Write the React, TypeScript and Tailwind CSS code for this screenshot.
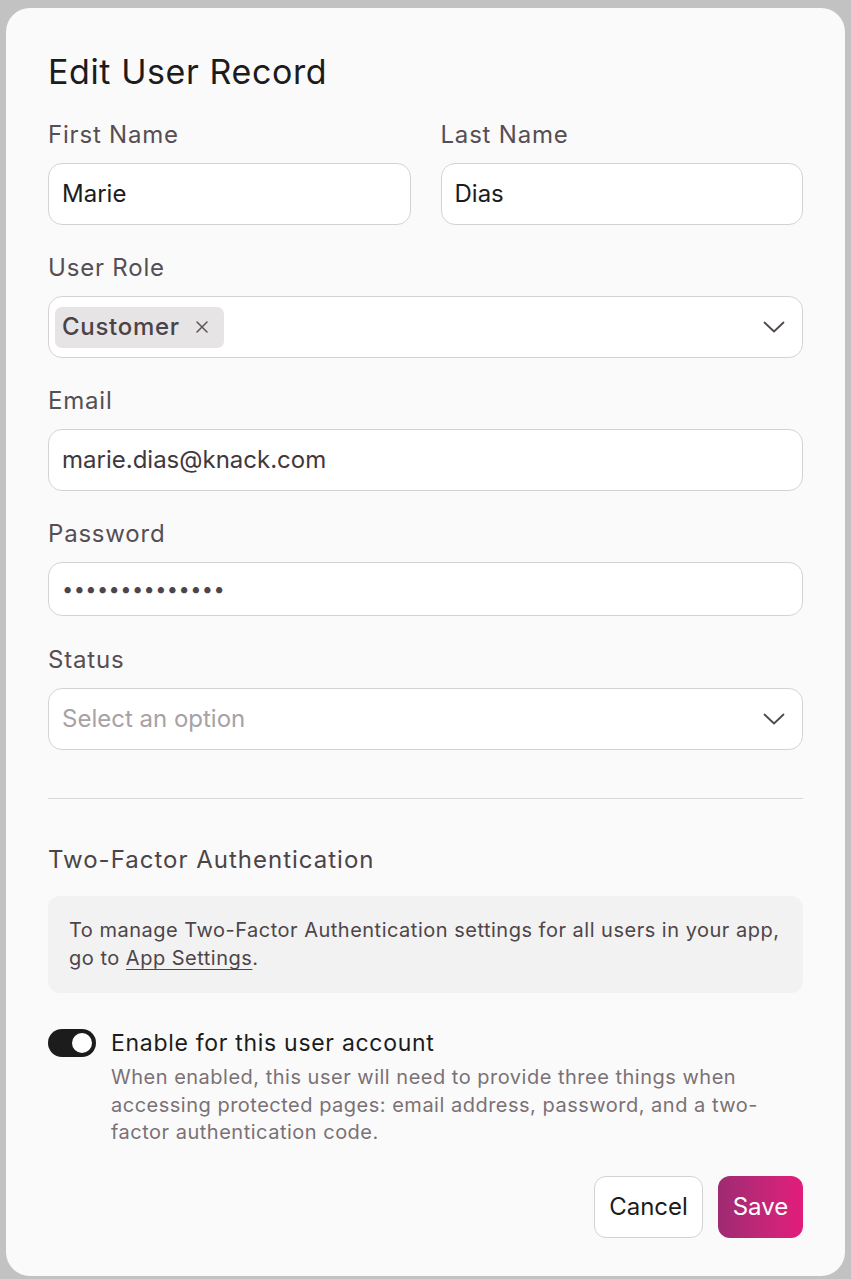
import React from "react";

const labelCls = "block h-[32px] leading-[32px] text-[24px] tracking-[0.8px] text-[#564e54]";
const boxCls =
  "w-full rounded-[14px] border border-[#d6d2d4] bg-white px-[13px] flex items-center";

function Chevron() {
  return (
    <svg width="22" height="12" viewBox="0 0 22 12" fill="none" className="shrink-0">
      <path d="M1.5 1.5 L11 10.5 L20.5 1.5" stroke="#4f484d" strokeWidth="1.8" strokeLinecap="round" strokeLinejoin="round" />
    </svg>
  );
}

function Field({ label, children }: { label: string; children: React.ReactNode }) {
  return (
    <div className="flex flex-col">
      <span className={labelCls}>{label}</span>
      <div className="mt-[12px]">{children}</div>
    </div>
  );
}

export default function App() {
  return (
    <div
      className="min-h-[1279px] bg-[#c2c2c2] px-[6px] pt-[8px] pb-[3px]"
      style={{ fontFamily: "Inter, 'Noto Sans', sans-serif" }}
    >
      <div className="rounded-[24px] bg-[#fafafa] px-[42px] pt-[44px] pb-[38px]">
        <h1 className="h-[40px] leading-[40px] text-[34px] tracking-[0.6px] text-[#1c1c1c]">Edit User Record</h1>

        <div className="mt-[27px] grid grid-cols-2 gap-[30px]">
          <Field label="First Name">
            <div className={`${boxCls} h-[62px] text-[24px] text-[#1c1c1c]`}>Marie</div>
          </Field>
          <Field label="Last Name">
            <div className={`${boxCls} h-[62px] text-[24px] text-[#1c1c1c]`}>Dias</div>
          </Field>
        </div>

        <div className="mt-[27px]">
          <Field label="User Role">
            <div className={`${boxCls} h-[62px] !pl-[6px] justify-between !pr-[17px]`}>
              <span className="flex h-[41px] items-center gap-[16px] rounded-[7px] bg-[#e6e4e5] pl-[7px] pr-[16px] text-[24px] font-medium tracking-[0.7px] text-[#4a4347]">
                Customer
                <svg width="12" height="12" viewBox="0 0 12 12" fill="none">
                  <path d="M1 1 L11 11 M11 1 L1 11" stroke="#5a5358" strokeWidth="1.5" strokeLinecap="round" />
                </svg>
              </span>
              <Chevron />
            </div>
          </Field>
        </div>

        <div className="mt-[27px]">
          <Field label="Email">
            <div className={`${boxCls} h-[62px] text-[24px] text-[#3f383c]`}>marie.dias@knack.com</div>
          </Field>
        </div>

        <div className="mt-[27px]">
          <Field label="Password">
            <div className={`${boxCls} h-[54px] text-[20px] tracking-[0.4px] text-[#4d4549]`}>
              ••••••••••••••
            </div>
          </Field>
        </div>

        <div className="mt-[28px]">
          <Field label="Status">
            <div className={`${boxCls} h-[62px] justify-between !pr-[17px] text-[24px] text-[#a8a1a5]`}>
              <span>Select an option</span>
              <Chevron />
            </div>
          </Field>
        </div>

        <div className="mt-[48px] border-t border-[#d9d8d9]" />

        <h2 className="mt-[45px] h-[32px] leading-[32px] text-[24px] tracking-[1px] text-[#4b4449]">
          Two-Factor Authentication
        </h2>

        <div className="mt-[20px] rounded-[12px] bg-[#f2f2f2] px-[21px] pt-[20px] pb-[21px] text-[20px] leading-[28px] tracking-[0.5px] text-[#4d4549]">
          To manage Two-Factor Authentication settings for all users in your app, go to{" "}
          <a className="underline underline-offset-[4px] decoration-[1px]">App Settings</a>.
        </div>

        <div className="mt-[34px] flex gap-[15px]">
          <div className="mt-[2px] flex h-[28px] w-[48px] shrink-0 items-center justify-end rounded-full bg-[#1c1c1c] pr-[4px]">
            <span className="h-[20px] w-[20px] rounded-full bg-white" />
          </div>
          <div className="flex flex-col">
            <span className="h-[32px] leading-[32px] text-[23px] tracking-[0.7px] text-[#1c1c1c]">
              Enable for this user account
            </span>
            <p className="mt-[5px] text-[20px] leading-[27.5px] tracking-[0.5px] text-[#7a7176]">
              When enabled, this user will need to provide three things when accessing protected pages: email address, password, and a two-factor authentication code.
            </p>
          </div>
        </div>

        <div className="mt-[29px] flex justify-end gap-[15px]">
          <button className="h-[62px] w-[109px] rounded-[12px] border border-[#d4d2d3] bg-white text-[24px] text-[#1c1c1c]">
            Cancel
          </button>
          <button className="h-[62px] w-[85px] rounded-[12px] bg-gradient-to-r from-[#9e2a72] to-[#e31b7b] text-[24px] text-white">
            Save
          </button>
        </div>
      </div>
    </div>
  );
}
